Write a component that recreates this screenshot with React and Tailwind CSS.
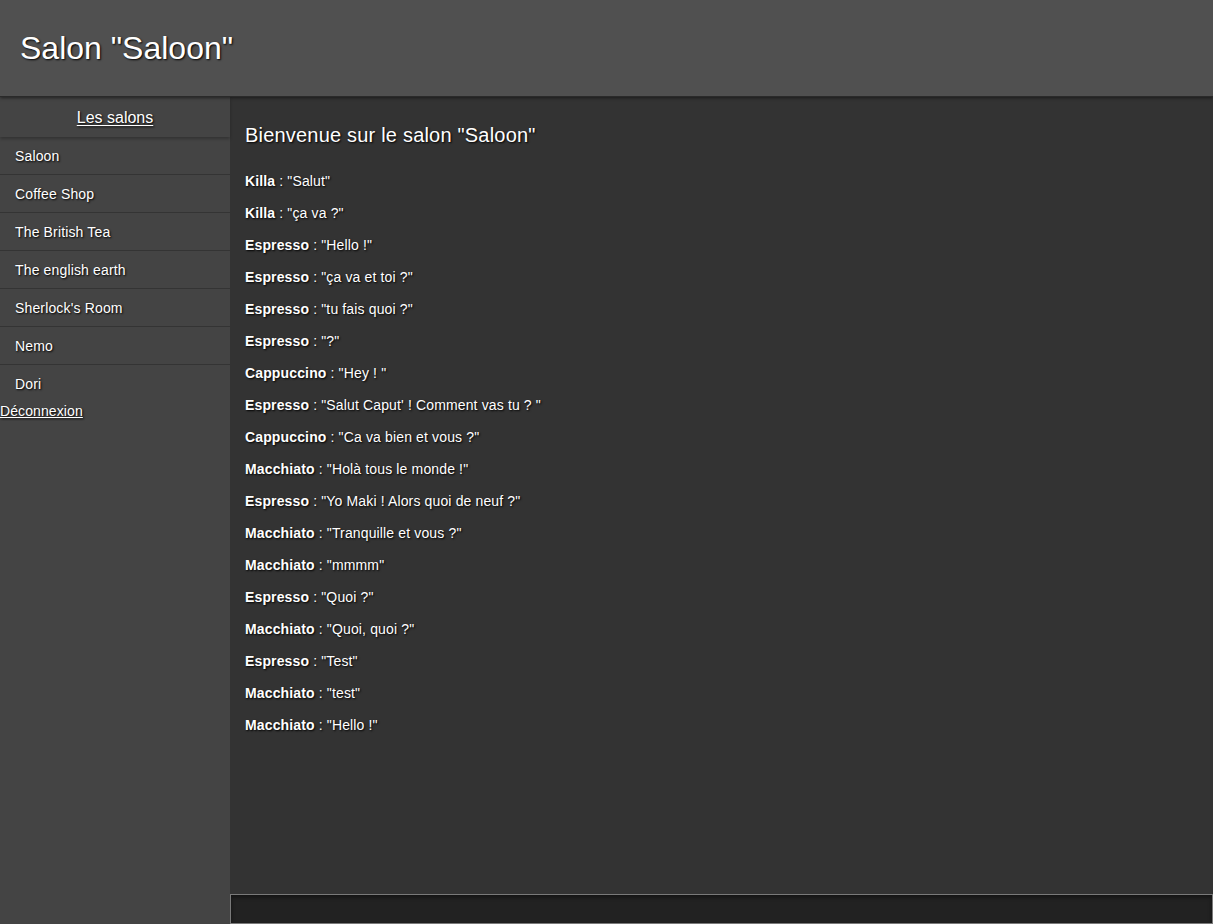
import React from 'react';

const salons = ['Saloon', 'Coffee Shop', 'The British Tea', 'The english earth', "Sherlock's Room", 'Nemo', 'Dori'];

const messages = [
  ['Killa', 'Salut'],
  ['Killa', 'ça va ?'],
  ['Espresso', 'Hello !'],
  ['Espresso', 'ça va et toi ?'],
  ['Espresso', 'tu fais quoi ?'],
  ['Espresso', '?'],
  ['Cappuccino', 'Hey ! '],
  ['Espresso', "Salut Caput' ! Comment vas tu ? "],
  ['Cappuccino', 'Ca va bien et vous ?'],
  ['Macchiato', 'Holà tous le monde !'],
  ['Espresso', 'Yo Maki ! Alors quoi de neuf ?'],
  ['Macchiato', 'Tranquille et vous ?'],
  ['Macchiato', 'mmmm'],
  ['Espresso', 'Quoi ?'],
  ['Macchiato', 'Quoi, quoi ?'],
  ['Espresso', 'Test'],
  ['Macchiato', 'test'],
  ['Macchiato', 'Hello !'],
];

export default function App() {
  return (
    <div className="flex h-[924px] flex-col overflow-hidden font-['Liberation_Sans',Arial,sans-serif] text-white [text-shadow:1px_1px_2px_#000]">
      {/* Header */}
      <header className="relative z-10 flex h-[97px] shrink-0 items-center border-b border-[#2a2a2a] bg-[#505050] px-5 shadow-[0_1px_3px_rgba(0,0,0,0.5)]">
        <h1 className="text-[32px] leading-none">Salon "Saloon"</h1>
      </header>

      <div className="flex flex-1">
        {/* Sidebar */}
        <aside className="w-[230px] shrink-0 bg-[#444]">
          <div className="relative flex h-[40px] items-center justify-center pt-[2px] shadow-[0_2px_3px_rgba(0,0,0,0.25)]">
            <a href="#" className="text-base underline underline-offset-2">Les salons</a>
          </div>
          <ul>
            {salons.map((s, i) => (
              <li
                key={s}
                className={`flex h-[38px] items-center px-[15px] text-sm tracking-[0.15px] ${i < salons.length - 1 ? 'border-b border-[#343434]' : ''}`}
              >
                {s}
              </li>
            ))}
          </ul>
          <a href="#" className="block text-sm leading-4 tracking-[0.1px] underline">Déconnexion</a>
        </aside>

        {/* Main */}
        <main className="flex flex-1 flex-col bg-[#333]">
          <div className="flex-1 px-[15px] pt-[27px]">
            <h2 className="text-xl leading-[23px] tracking-[0.2px]">Bienvenue sur le salon "Saloon"</h2>
            <div className="mt-[26px] flex flex-col gap-4">
              {messages.map(([who, text], i) => (
                <p key={i} className="text-sm leading-4 tracking-[0.14px]">
                  <b>{who}</b> : "{text}"
                </p>
              ))}
            </div>
          </div>
          <input
            type="text"
            className="h-[30px] w-full border border-[#7a7a7a] bg-[#222] px-2 text-sm text-white shadow-[inset_0_2px_4px_rgba(0,0,0,0.5)] outline-none"
          />
        </main>
      </div>
    </div>
  );
}
